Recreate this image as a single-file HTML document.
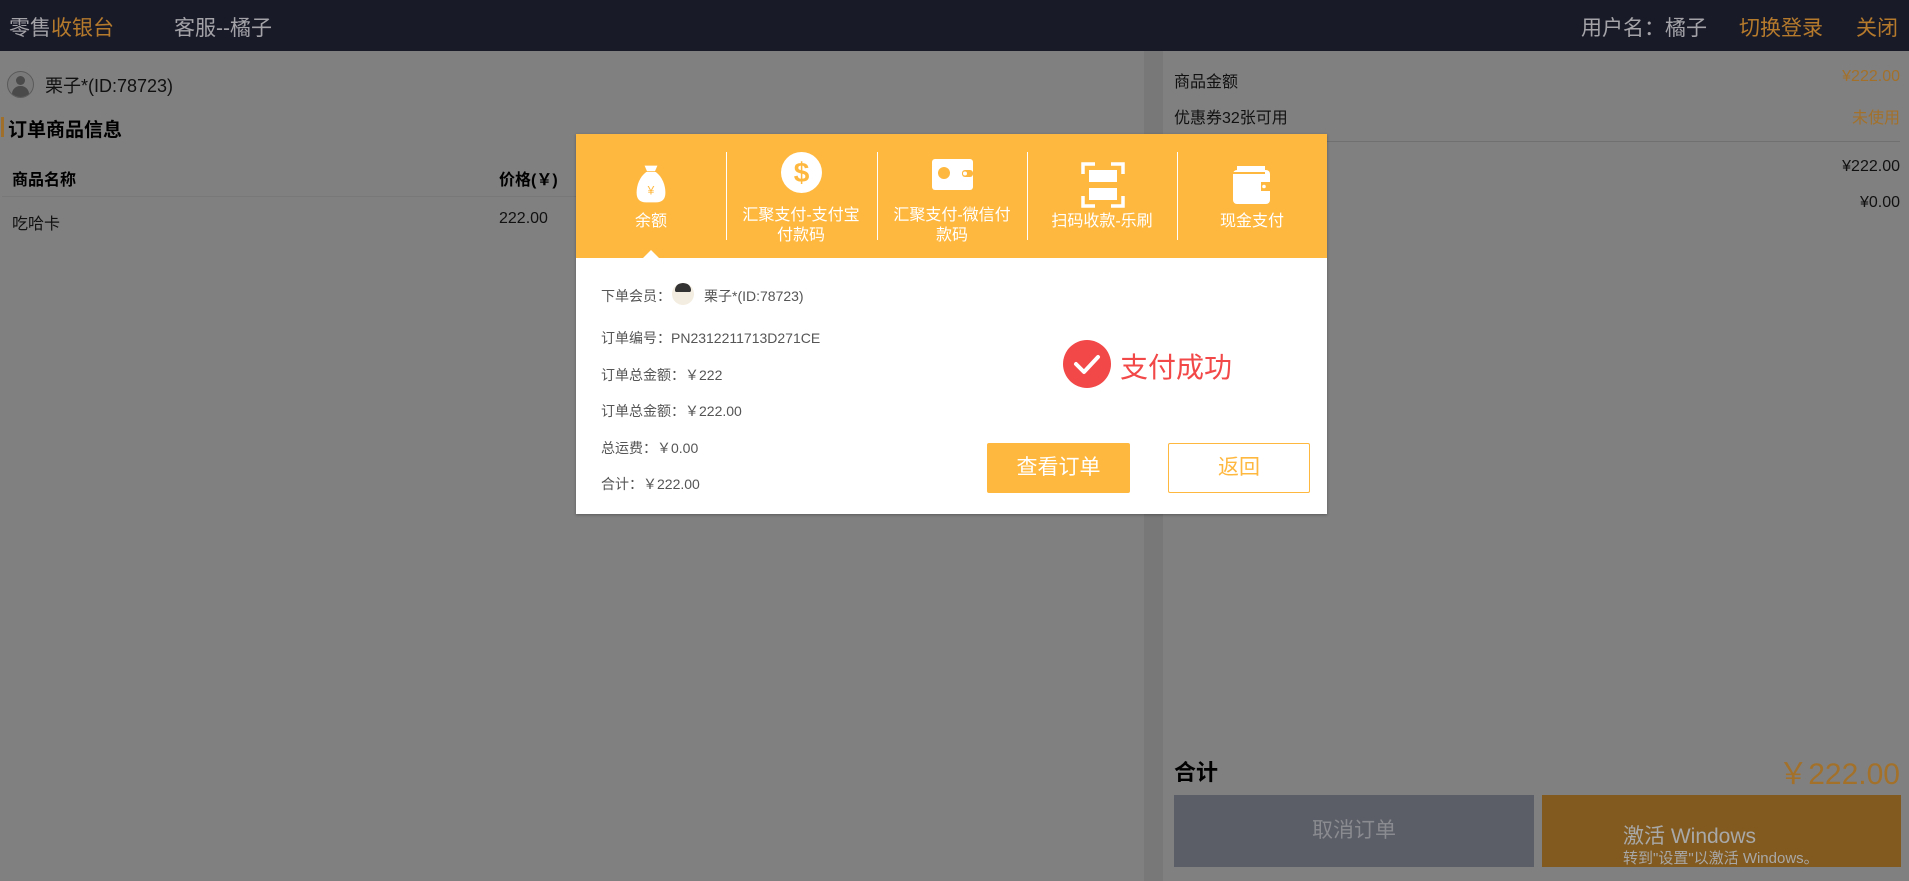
<!DOCTYPE html>
<html><head><meta charset="utf-8"><style>
*{margin:0;padding:0;box-sizing:border-box}
body{width:1909px;height:881px;overflow:hidden;background:#808080;font-family:"Liberation Sans","Noto Sans CJK SC",sans-serif;position:relative}
.a{position:absolute;white-space:nowrap}
.hdr{left:0;top:0;width:1909px;height:51px;background:#191a28}
.hdr .a{font-size:21px;top:12px}
.tab{position:absolute;top:0;width:150px;height:124px;color:#fff;font-size:16px;text-align:center}
.tab .lbl{position:absolute;left:0;width:150px;line-height:20px}
.div{position:absolute;top:18px;width:1px;height:88px;background:#fff}
.row{position:absolute;left:25px;font-size:14px;color:#555}
</style></head><body>
<div class="a hdr">
 <div class="a" style="left:9px;color:#a3a3a8">零售<span style="color:#b57a2c">收银台</span></div>
 <div class="a" style="left:174px;color:#a3a3a8">客服--橘子</div>
 <div class="a" style="left:1581px;color:#a3a3a8">用户名：橘子</div>
 <div class="a" style="left:1739px;color:#b57a2c">切换登录</div>
 <div class="a" style="left:1856px;color:#b57a2c">关闭</div>
</div>
<!-- left -->
<div class="a" style="left:7px;top:71px;width:27px;height:27px;border-radius:50%;border:1px solid #5a5a5a;background:#7a7a7a;overflow:hidden">
 <div style="position:absolute;left:8px;top:4px;width:9px;height:9px;border-radius:50%;background:#4a4a4a"></div>
 <div style="position:absolute;left:4px;top:14px;width:17px;height:14px;border-radius:8px 8px 0 0;background:#4a4a4a"></div>
</div>
<div class="a" style="left:45px;top:72px;font-size:18px;color:#111">栗子*(ID:78723)</div>
<div class="a" style="left:1px;top:117px;width:3px;height:20px;background:#a0702a"></div>
<div class="a" style="left:8px;top:115px;font-size:19px;font-weight:bold;color:#000">订单商品信息</div>
<div class="a" style="left:12px;top:166px;font-size:16px;font-weight:bold;color:#000">商品名称</div>
<div class="a" style="left:499px;top:166px;font-size:16px;font-weight:bold;color:#000">价格(￥)</div>
<div class="a" style="left:2px;top:196px;width:1142px;height:1px;background:#787878"></div>
<div class="a" style="left:12px;top:210px;font-size:16px;color:#111">吃哈卡</div>
<div class="a" style="left:499px;top:210px;font-size:16px;color:#111">222.00</div>
<div class="a" style="left:1144px;top:51px;width:19px;height:830px;background:#787878"></div>
<!-- right -->
<div class="a" style="left:1174px;top:68px;font-size:16px;color:#111">商品金额</div>
<div class="a" style="right:9px;top:68px;font-size:16px;color:#a3712a">¥222.00</div>
<div class="a" style="left:1174px;top:104px;font-size:16px;color:#111">优惠券32张可用</div>
<div class="a" style="right:9px;top:104px;font-size:16px;color:#a3712a">未使用</div>
<div class="a" style="left:1174px;top:141px;width:726px;height:1px;background:#707070"></div>
<div class="a" style="right:9px;top:158px;font-size:16px;color:#111">¥222.00</div>
<div class="a" style="right:9px;top:194px;font-size:16px;color:#111">¥0.00</div>
<div class="a" style="left:1174px;top:755px;font-size:22px;font-weight:bold;color:#000">合计</div>
<div class="a" style="right:9px;top:749px;font-size:30px;color:#a3712a">￥222.00</div>
<div class="a" style="left:1174px;top:795px;width:360px;height:72px;background:#5b5d67;color:#8a8b90;font-size:21px;text-align:center;line-height:72px">取消订单</div>
<div class="a" style="left:1542px;top:795px;width:359px;height:72px;background:#825a1f"></div>
<div class="a" style="left:1623px;top:820px;font-size:21px;color:#a8a8a8">激活 Windows</div>
<div class="a" style="left:1623px;top:847px;font-size:15px;color:#a8a8a8">转到"设置"以激活 Windows。</div>
<!-- modal -->
<div class="a" style="left:576px;top:134px;width:751px;height:380px;background:#fff;box-shadow:0 1px 3px rgba(0,0,0,.3)">
 <div style="position:absolute;left:0;top:0;width:751px;height:124px;background:#ffb83f">
  <div class="tab" style="left:0">
   <svg style="position:absolute;left:58px;top:30px" width="34" height="40" viewBox="0 0 38 50"><path d="M11 2h16l-3 7h-10z" fill="#fff"/><path d="M13 10h12c8 6 12 16 12 26 0 8-4 12-12 12h-12c-8 0-12-4-12-12 0-10 4-20 12-26z" fill="#fff"/><text x="19" y="38" font-size="15" fill="#ffb83f" text-anchor="middle" font-family="Liberation Sans">¥</text></svg>
   <div class="lbl" style="top:78px">余额</div>
  </div>
  <div class="div" style="left:150px"></div>
  <div class="tab" style="left:150px">
   <svg style="position:absolute;left:55px;top:18px" width="41" height="41" viewBox="0 0 41 41"><circle cx="20.5" cy="20.5" r="20.5" fill="#fff"/><text x="20.5" y="30" font-size="28" font-weight="bold" fill="#ffb83f" text-anchor="middle" font-family="Liberation Sans">$</text></svg>
   <div class="lbl" style="top:72px">汇聚支付-支付宝<br>付款码</div>
  </div>
  <div class="div" style="left:301px"></div>
  <div class="tab" style="left:301px">
   <svg style="position:absolute;left:55px;top:25px" width="41" height="31" viewBox="0 0 41 31"><rect width="41" height="31" rx="3" fill="#fff"/><circle cx="12" cy="14" r="6" fill="#ffb83f"/><rect x="30" y="11" width="11" height="7" rx="3" fill="#ffb83f"/><circle cx="33" cy="14.5" r="2" fill="#fff"/></svg>
   <div class="lbl" style="top:72px">汇聚支付-微信付<br>款码</div>
  </div>
  <div class="div" style="left:451px"></div>
  <div class="tab" style="left:451px">
   <svg style="position:absolute;left:54px;top:28px" width="44" height="46" viewBox="0 0 44 46"><path d="M2 12V2h12M30 2h12v10M42 34v10H30M14 44H2V34" stroke="#fff" stroke-width="3.5" fill="none"/><rect x="8" y="8" width="28" height="12" fill="#fff"/><rect x="8" y="26" width="28" height="12" fill="#fff"/></svg>
   <div class="lbl" style="top:78px">扫码收款-乐刷</div>
  </div>
  <div class="div" style="left:601px"></div>
  <div class="tab" style="left:601px">
   <svg style="position:absolute;left:56px;top:32px" width="37" height="38" viewBox="0 0 37 38"><path d="M4 0h28v6H4z" fill="#fff"/><rect x="0" y="4" width="37" height="34" rx="4" fill="#fff"/><path d="M0 7h32" stroke="#ffb83f" stroke-width="2"/><rect x="28" y="16" width="9" height="9" fill="#ffb83f"/><circle cx="31" cy="20.5" r="1.8" fill="#fff"/></svg>
   <div class="lbl" style="top:78px">现金支付</div>
  </div>
 </div>
 <div style="position:absolute;left:67px;top:116px;width:0;height:0;border-left:8px solid transparent;border-right:8px solid transparent;border-bottom:8px solid #fff"></div>
 <div class="row" style="top:152px">下单会员：</div>
 <div style="position:absolute;left:96px;top:149px;width:22px;height:22px;border-radius:50%;background:#f3ece0;overflow:hidden"><div style="position:absolute;left:3px;top:0;width:16px;height:9px;background:#333;border-radius:8px 8px 2px 2px"></div></div>
 <div class="row" style="left:128px;top:152px">栗子*(ID:78723)</div>
 <div class="row" style="top:194px">订单编号：PN2312211713D271CE</div>
 <div class="row" style="top:231px">订单总金额：￥222</div>
 <div class="row" style="top:267px">订单总金额：￥222.00</div>
 <div class="row" style="top:304px">总运费：￥0.00</div>
 <div class="row" style="top:340px">合计：￥222.00</div>
 <svg style="position:absolute;left:487px;top:206px" width="48" height="48" viewBox="0 0 48 48"><circle cx="24" cy="24" r="24" fill="#f24848"/><path d="M13 24l8 8 14-15" stroke="#fff" stroke-width="4" fill="none" stroke-linecap="round" stroke-linejoin="round"/></svg>
 <div class="a" style="left:544px;top:212px;font-size:28px;color:#f24848">支付成功</div>
 <div class="a" style="left:411px;top:309px;width:143px;height:50px;background:#ffb83f;border-radius:2px;color:#fff;font-size:21px;text-align:center;line-height:50px">查看订单</div>
 <div class="a" style="left:592px;top:309px;width:142px;height:50px;border:1px solid #ffb83f;border-radius:2px;color:#ffb83f;font-size:21px;text-align:center;line-height:48px">返回</div>
</div>
</body></html>
